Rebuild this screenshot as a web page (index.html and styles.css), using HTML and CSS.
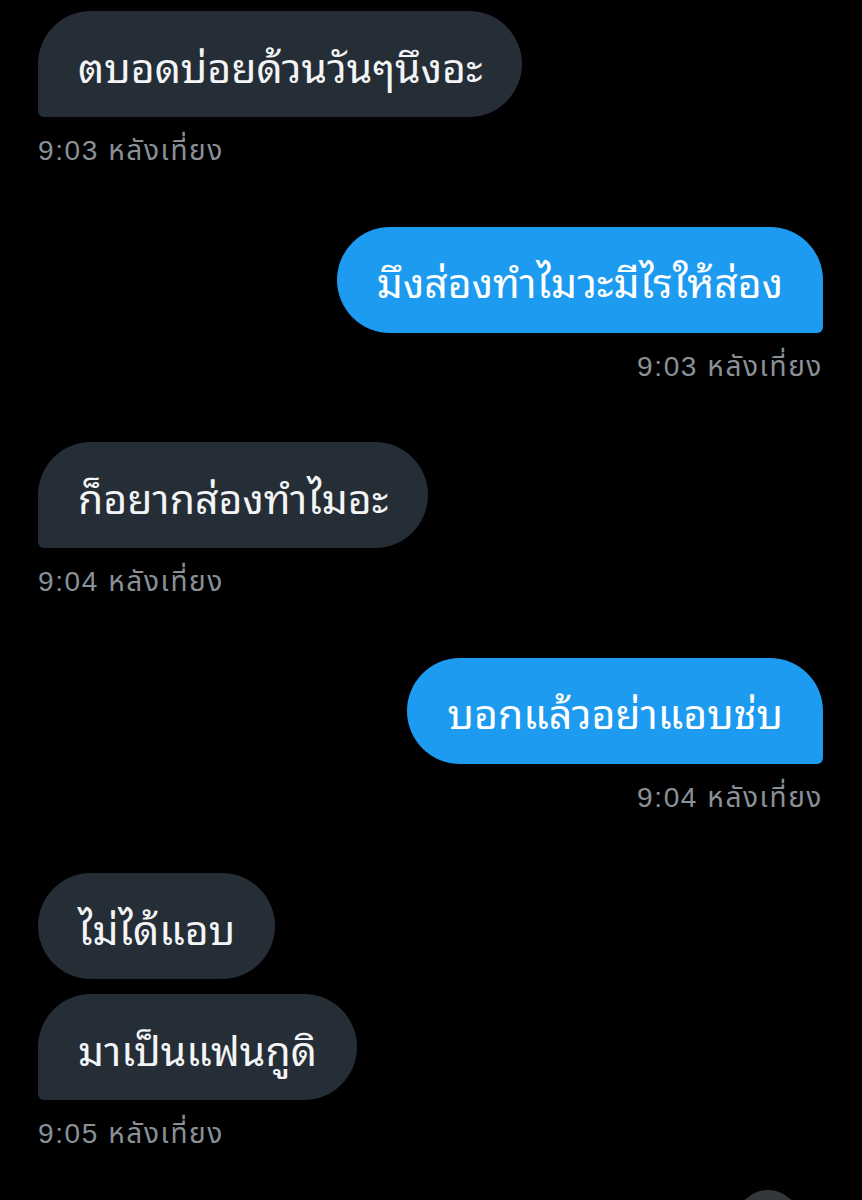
FILE: index.html
```html
<!DOCTYPE html>
<html lang="th">
<head>
    <meta charset="UTF-8">
    <meta name="viewport" content="width=device-width, initial-scale=1.0">
    <title>ข้อความ</title>
    <link rel="stylesheet" href="styles.css">
</head>
<body>
    <!-- Conversación -->
    <div class="chat">
        <div class="group in">
            <div class="bubble">ตบอดบ่อยด้วนวันๆนึงอะ</div>
            <div class="time">9:03 หลังเที่ยง</div>
        </div>

        <div class="group out">
            <div class="bubble">มึงส่องทำไมวะมีไรให้ส่อง</div>
            <div class="time">9:03 หลังเที่ยง</div>
        </div>

        <div class="group in">
            <div class="bubble">ก็อยากส่องทำไมอะ</div>
            <div class="time">9:04 หลังเที่ยง</div>
        </div>

        <div class="group out">
            <div class="bubble">บอกแล้วอย่าแอบช่บ</div>
            <div class="time">9:04 หลังเที่ยง</div>
        </div>

        <div class="group in">
            <div class="bubble">ไม่ได้แอบ</div>
            <div class="bubble">มาเป็นแฟนกูดิ</div>
            <div class="time">9:05 หลังเที่ยง</div>
        </div>
    </div>

    <!-- Botón para bajar -->
    <div class="scroll-btn"></div>
</body>
</html>
```

FILE: styles.css
```css
* {
    margin: 0;
    padding: 0;
    box-sizing: border-box;
}

body {
    background: #000;
    font-family: 'Noto Sans Thai Looped', 'Noto Sans Thai', 'Noto Sans', sans-serif;
    min-height: 100vh;
    overflow: hidden;
}

.chat {
    display: flex;
    flex-direction: column;
    gap: 59.5px;
    padding: 11px 39px 0 38px;
}

.group {
    display: flex;
    flex-direction: column;
    gap: 15px;
}

.group.in {
    align-items: flex-start;
}

.group.out {
    align-items: flex-end;
}

/* Burbujas */
.bubble {
    height: 106px;
    display: flex;
    align-items: center;
    padding: 0 40px;
    font-size: 41px;
    color: #f2f4f5;
    border-radius: 53px;
    white-space: nowrap;
}

.in .bubble {
    background: #252e36;
    border-bottom-left-radius: 6px;
}

.in .bubble:not(:nth-last-child(2)) {
    border-bottom-left-radius: 53px;
}

.out .bubble {
    background: #1d9bf0;
    color: #fff;
    border-bottom-right-radius: 6px;
}

/* Hora */
.time {
    font-family: 'Liberation Sans', 'Noto Sans Thai', sans-serif;
    font-size: 28px;
    letter-spacing: 1.6px;
    line-height: 32px;
    color: #8a9097;
    margin-top: 3px;
}

.scroll-btn {
    position: absolute;
    left: 736px;
    top: 1190px;
    width: 64px;
    height: 64px;
    border-radius: 50%;
    background: #33383d;
}
```
